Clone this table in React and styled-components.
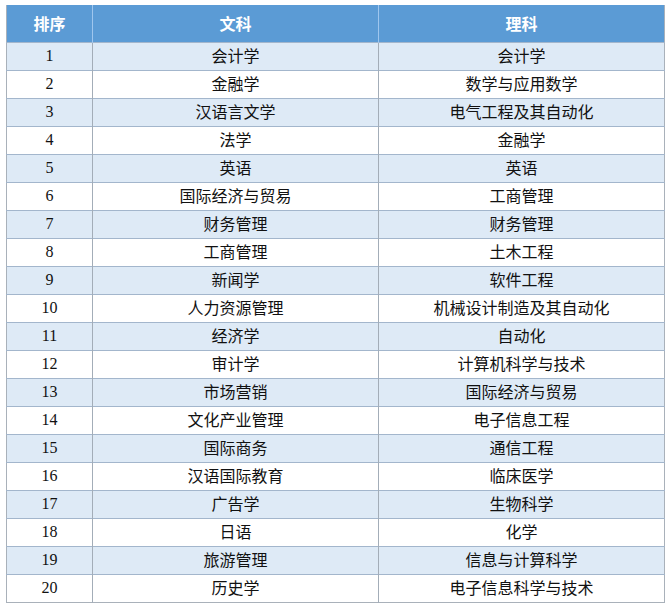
import React from "react";
import styled, {createGlobalStyle} from "styled-components";

const rows = [
  ["会计学", "会计学"],
  ["金融学", "数学与应用数学"],
  ["汉语言文学", "电气工程及其自动化"],
  ["法学", "金融学"],
  ["英语", "英语"],
  ["国际经济与贸易", "工商管理"],
  ["财务管理", "财务管理"],
  ["工商管理", "土木工程"],
  ["新闻学", "软件工程"],
  ["人力资源管理", "机械设计制造及其自动化"],
  ["经济学", "自动化"],
  ["审计学", "计算机科学与技术"],
  ["市场营销", "国际经济与贸易"],
  ["文化产业管理", "电子信息工程"],
  ["国际商务", "通信工程"],
  ["汉语国际教育", "临床医学"],
  ["广告学", "生物科学"],
  ["日语", "化学"],
  ["旅游管理", "信息与计算科学"],
  ["历史学", "电子信息科学与技术"]
];

export default function App() {
  return (
    <>
      <GlobalStyle />
      <Page>
        <Table>
          <colgroup>
            <col style={{width: 86}} />
            <col style={{width: 286}} />
            <col style={{width: 286}} />
          </colgroup>
          <thead>
            <tr>
              <Head>排序</Head>
              <Head>文科</Head>
              <Head>理科</Head>
            </tr>
          </thead>
          <tbody>
            {rows.map((r, i) => (
              <Row key={i} striped={i % 2 === 0}>
                <Num>{i + 1}</Num>
                <Cell>{r[0]}</Cell>
                <Cell>{r[1]}</Cell>
              </Row>
            ))}
          </tbody>
        </Table>
      </Page>
    </>
  );
}

const GlobalStyle = createGlobalStyle`
  html, body {
    margin: 0;
    padding: 0;
    background: #fff;
  }
`;

const Page = styled.div`
  padding: 5px 4px 0 6px;
`;

const Table = styled.table`
  border-collapse: collapse;
  table-layout: fixed;
  width: 658px;
  border-left: 1px solid #a9b1ba;
  border-right: 1px solid #a9b1ba;
  border-bottom: 1px solid #a9b1ba;
`;

const Head = styled.th`
  height: 35px;
  padding: 0 0 2px;
  background: #5b9bd5;
  color: #fff;
  font: bold 16px/20px "Noto Sans CJK SC", sans-serif;
  text-align: center;
  border-left: 1px solid #9fc6ee;
  &:first-child {
    border-left: none;
  }
`;

const Row = styled.tr`
  background: ${(p) => (p.striped ? "#deeaf6" : "#fff")};
  border-top: 1px solid #a3b6cc;
  height: 28px;
`;

const Cell = styled.td`
  height: 24px;
  padding: 0 0 3px;
  text-align: center;
  color: #111;
  font: 16px/20px "Noto Sans CJK SC", sans-serif;
  border-left: 1px solid #a3adb8;
  white-space: nowrap;
`;

const Num = styled(Cell)`
  padding: 0 0 1px;
  border-left: none;
  font: 16px/20px "Liberation Serif", serif;
`;
